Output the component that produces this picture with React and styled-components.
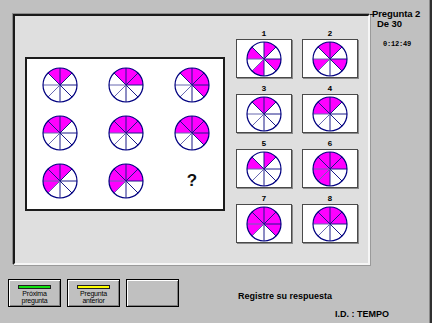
import React from "react";
import styled, { createGlobalStyle } from "styled-components";

const GlobalStyle = createGlobalStyle`
  body {
    margin: 0;
    background: #c0c0c0;
    font-family: "Liberation Sans", Arial, sans-serif;
  }
`;

const Screen = styled.div`
  width: 432px;
  height: 323px;
  box-sizing: border-box;
  background: #c0c0c0;
  border-right: 2px solid #303030;
  box-shadow: inset -1px 0 0 #8a8a8a;
  display: flex;
  flex-direction: column;
  overflow: hidden;
`;

const TopArea = styled.div`
  display: flex;
  align-items: flex-start;
  padding-left: 13px;
`;

const Panel = styled.div`
  width: 357px;
  height: 251px;
  margin-top: 14px;
  box-sizing: border-box;
  background: #dfdfdf;
  border: 2px solid;
  border-color: #1a1a1a #f6f6f6 #f6f6f6 #1a1a1a;
  box-shadow: -1px -1px 0 #8c8c8c, 1px 1px 0 #9a9a9a;
  display: flex;
  align-items: flex-start;
  padding-left: 10px;
`;

const PuzzleBox = styled.div`
  width: 200px;
  height: 154px;
  margin-top: 41px;
  box-sizing: border-box;
  background: #fff;
  border: 2px solid #1c1c1c;
  display: grid;
  grid-template-columns: repeat(3, 66px);
  grid-template-rows: repeat(3, 48px);
  padding-top: 2px;
  place-items: center;
`;

const Question = styled.span`
  font-family: "Liberation Sans", Arial, sans-serif;
  font-weight: bold;
  font-size: 17px;
  color: #111;
`;

const Options = styled.div`
  margin-left: 11px;
  margin-top: 14px;
  display: grid;
  grid-template-columns: 56px 56px;
  column-gap: 10px;
  row-gap: 7px;
`;

const Option = styled.div`
  display: flex;
  flex-direction: column;
  align-items: center;
`;

const OptionLabel = styled.div`
  height: 9px;
  font-family: "Liberation Mono", "Courier New", monospace;
  font-weight: bold;
  font-size: 8px;
  line-height: 8px;
  color: #000;
`;

const OptionBox = styled.div`
  width: 56px;
  height: 39px;
  box-sizing: border-box;
  background: #fff;
  border: 1px solid #4a4a4a;
  box-shadow: 1px 1px 0 #8a8a8a;
  display: flex;
  align-items: center;
  justify-content: center;
`;

const Info = styled.div`
  display: flex;
  flex-direction: column;
  padding-top: 9px;
  position: relative;
`;

const InfoLine = styled.div`
  font-weight: bold;
  font-size: 9.5px;
  line-height: 10px;
  color: #000;
  padding-left: ${(p) => p.$indent || 2}px;
  letter-spacing: -0.1px;
`;

const Dash = styled.span`
  position: absolute;
  left: 0;
  top: 14px;
  width: 3px;
  height: 1px;
  background: #1a1a1a;
`;

const Clock = styled.div`
  margin-top: 11px;
  padding-left: 13px;
  font-family: "Liberation Mono", "Courier New", monospace;
  font-weight: bold;
  font-size: 7px;
  letter-spacing: -0.2px;
  color: #000;
`;

const BottomArea = styled.div`
  display: flex;
  flex-direction: column;
  padding-top: 14px;
`;

const ButtonRow = styled.div`
  display: flex;
  align-items: center;
  padding-left: 8px;
  gap: 6px;
`;

const Button = styled.div`
  width: 53px;
  height: 28px;
  box-sizing: border-box;
  background: #c0c0c0;
  border: 1px solid #000;
  box-shadow: inset 1px 1px 0 #fff, inset -1px -1px 0 #808080;
  display: flex;
  flex-direction: column;
  align-items: center;
  padding-top: 5px;
`;

const Lamp = styled.div`
  width: 33px;
  height: 4px;
  box-sizing: border-box;
  background: ${(p) => p.$color};
  border: 1px solid #202020;
`;

const ButtonText = styled.div`
  margin-top: 2px;
  font-size: 7px;
  line-height: 6.5px;
  text-align: center;
  color: #000;
  letter-spacing: -0.2px;
`;

const Message = styled.div`
  margin-left: 53px;
  margin-top: 6px;
  font-weight: bold;
  font-size: 9px;
  color: #000;
`;

const IdLine = styled.div`
  padding-left: 335px;
  margin-top: 2px;
  font-weight: bold;
  font-size: 9px;
  line-height: 10px;
  color: #000;
`;

function point(a, r) {
  const rad = (a * Math.PI) / 180;
  return [18 + r * Math.sin(rad), 18 - r * Math.cos(rad)];
}

function Pie({ filled }) {
  const r = 17;
  return (
    <svg width="36" height="36" viewBox="0 0 36 36">
      <circle cx="18" cy="18" r={r} fill="#fff" />
      {filled.map((i) => {
        const [x1, y1] = point(i * 45, r);
        const [x2, y2] = point(i * 45 + 45, r);
        return (
          <path
            key={i}
            d={`M18 18 L${x1} ${y1} A${r} ${r} 0 0 1 ${x2} ${y2} Z`}
            fill="#ff00ff"
          />
        );
      })}
      {[0, 1, 2, 3, 4, 5, 6, 7].map((i) => {
        const [x, y] = point(i * 45, r);
        const light = i === 5 || i === 6;
        return (
          <line
            key={i}
            x1="18"
            y1="18"
            x2={x}
            y2={y}
            stroke={light ? "#6868b0" : "#1a1a88"}
            strokeWidth="1"
          />
        );
      })}
      <circle cx="18" cy="18" r={r} fill="none" stroke="#000080" strokeWidth="1.2" />
    </svg>
  );
}

const puzzle = [
  [7, 0],
  [7, 0, 1],
  [7, 0, 1, 2],
  [6, 7, 0],
  [6, 7, 0, 1],
  [6, 7, 0, 1, 2],
  [5, 6, 7, 0],
  [5, 6, 7, 0, 1],
];

const answers = [
  [0, 2, 4, 6],
  [7, 0, 2, 5],
  [7, 0],
  [6, 7, 0],
  [0, 6],
  [4, 5, 6, 7, 0, 1],
  [5, 6, 7, 0, 1, 2],
  [6, 7, 0, 1],
];

export default function App() {
  return (
    <>
      <GlobalStyle />
      <Screen>
        <TopArea>
          <Panel>
            <PuzzleBox>
              {puzzle.map((f, i) => (
                <Pie key={i} filled={f} />
              ))}
              <Question>?</Question>
            </PuzzleBox>
            <Options>
              {answers.map((f, i) => (
                <Option key={i}>
                  <OptionLabel>{i + 1}</OptionLabel>
                  <OptionBox>
                    <Pie filled={f} />
                  </OptionBox>
                </Option>
              ))}
            </Options>
          </Panel>
          <Info>
            <Dash />
            <InfoLine>Pregunta 2</InfoLine>
            <InfoLine $indent={7}>De 30</InfoLine>
            <Clock>0:12:49</Clock>
          </Info>
        </TopArea>
        <BottomArea>
          <ButtonRow>
            <Button>
              <Lamp $color="#10e010" />
              <ButtonText>
                Próxima
                <br />
                pregunta
              </ButtonText>
            </Button>
            <Button>
              <Lamp $color="#ffff00" />
              <ButtonText>
                Pregunta
                <br />
                anterior
              </ButtonText>
            </Button>
            <Button />
            <Message>Registre su respuesta</Message>
          </ButtonRow>
          <IdLine>I.D. : TEMPO</IdLine>
        </BottomArea>
      </Screen>
    </>
  );
}
